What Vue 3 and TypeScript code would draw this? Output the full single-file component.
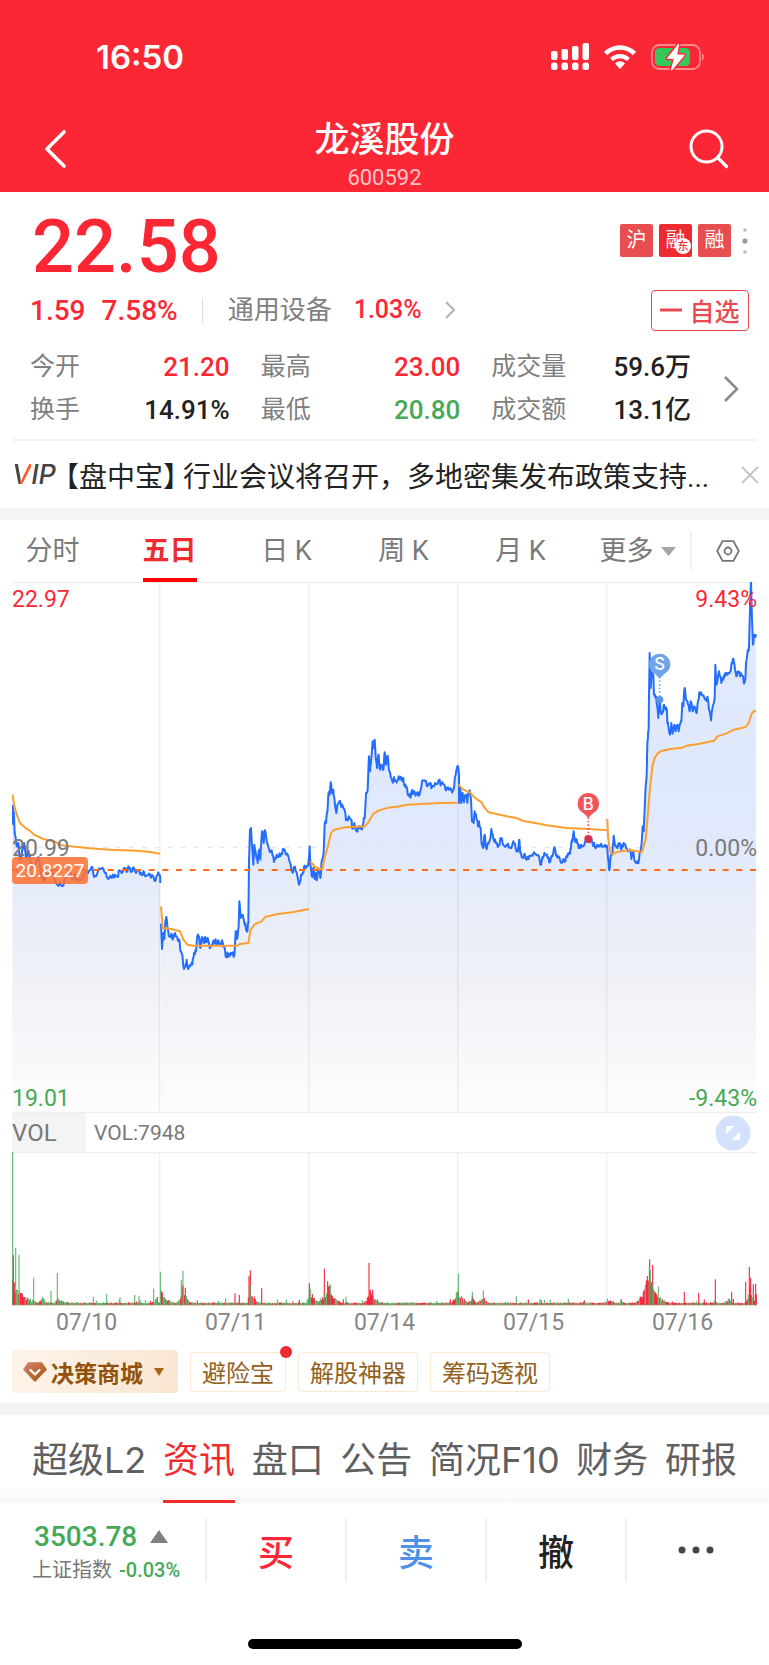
<script setup lang="ts">
import { ref } from 'vue'

type Point = [number, number]

interface Quote {
  label: string
  value: string
  tone: 'up' | 'down' | 'flat'
}

const quotes: Quote[] = [
  { label: '今开', value: '21.20', tone: 'up' },
  { label: '最高', value: '23.00', tone: 'up' },
  { label: '成交量', value: '59.6万', tone: 'flat' },
  { label: '换手', value: '14.91%', tone: 'flat' },
  { label: '最低', value: '20.80', tone: 'down' },
  { label: '成交额', value: '13.1亿', tone: 'flat' },
]

const periods = ['分时', '五日', '日 K', '周 K', '月 K']
const activePeriod = ref('五日')
const dates = ['07/10', '07/11', '07/14', '07/15', '07/16']
const tools = ['避险宝', '解股神器', '筹码透视']
const sections = ['超级L2', '资讯', '盘口', '公告', '简况F10', '财务', '研报']
const activeSection = ref('资讯')

/* Deterministic noise so the minute-level ticks are stable between renders. */
function makeNoise(seed: number): () => number {
  let s = seed
  return () => {
    s = (s * 1103515245 + 12345) % 2147483648
    return s / 2147483648
  }
}

function shift(text: string, dx: number, dy: number): Point[] {
  return text
    .trim()
    .split(/\s+/)
    .map((pair) => {
      const [x, y] = pair.split(',').map(Number)
      return [x + dx, y + dy] as Point
    })
}

function lineOf(points: Point[]): string {
  return 'M' + points.map(([x, y]) => `${x.toFixed(1)} ${y.toFixed(1)}`).join('L')
}

const tick = makeNoise(7)
function roughen(points: Point[]): Point[] {
  const out: Point[] = [points[0]]
  for (let i = 1; i < points.length; i++) {
    const [ax, ay] = points[i - 1]
    const [bx, by] = points[i]
    if (bx - ax >= 4) {
      out.push([ax + (bx - ax) * 0.35, ay + (by - ay) * 0.35 + (tick() - 0.5) * 18])
      out.push([ax + (bx - ax) * 0.7, ay + (by - ay) * 0.7 + (tick() - 0.5) * 18])
    }
    out.push([bx, by])
  }
  return out
}

/* Chart units are one third of a CSS pixel at the design width. */
const FLOOR = 1592

const firstDay = shift(
  `37,135 38,78 42,110 44,160 47,175 50,200 55,190 60,240 66,215 72,190 78,235 86,215 92,255 100,260
  108,245 118,238 125,295 135,300 145,270 160,285 172,315 180,308 190,318 200,290 210,275 216,300 225,285
  235,305 245,300 255,280 268,272 277,262 282,292 290,287 300,268 307,264 312,275 320,292 335,295 345,285
  352,290 358,272 365,280 372,265 380,277 387,265 395,275 400,263 408,280 417,272 425,287 433,280 440,288
  450,287 458,290 464,304 472,287 480,287 481,310`, 0, 593)

const laterDays = [
  ...shift(
    `483,432 486,508 490,460 493,478 496,425 499,412 503,445 508,470 514,462 518,480 525,460 532,474 538,480
    542,515 547,525 550,560 556,562 560,540 565,568 570,560 577,555 582,520 588,515 592,470 597,470 601,505
    606,472 611,490 615,472 619,488 623,475 629,505 634,498 639,485 645,482 650,495 656,485 661,495 668,488
    674,505 678,532 684,522 690,528 697,525 703,528 707,455 711,478 716,440 718,365 722,415 728,405 733,430
    737,440 741,456 745,430 747,245 750,150 753,145 756,200 760,255 763,195 768,225 773,250 778,210 781,240
    785,165 789,158 791,190 795,152 800,185 807,207 815,212 822,247 830,225 836,232 844,222 851,212 858,225
    865,230 872,255 877,278 882,262 890,278 897,315 903,285 908,280 914,258 924,258 929,200 931,255
    933,265 937,292 941,265 944,298 947,280 950,302 955,268 961,295 966,240 971,215 974,135 978,130 983,85
    985,45 989,45 992,8 996,40 1000,30 1004,65 1009,100 1013,75 1018,65 1024,82 1030,85 1036,100 1038,122
    1046,110 1055,122 1056,145 1063,130 1070,155 1076,145 1083,148 1090,130 1094,115 1098,40 1103,30`, 0, 593),
  ...shift(
    `1107,740 1110,785 1114,745 1118,695 1121,715 1124,690 1127,740 1131,775 1136,735 1140,780 1144,765
    1150,780 1154,728 1158,765 1163,738 1168,785`, 0, -217),
  ...shift(
    `34,805 37,815 42,802 47,815 52,812 56,800 60,810 65,805 70,805 74,830 80,832 84,852 90,862 95,845
    100,850 106,858 112,848 117,858 122,840 128,812 136,815 142,830 150,825 156,832 165,820 176,812 184,822
    192,825 198,842 206,840 214,842 221,838 226,800 230,778 235,774 237,795 237,880 241,835 244,880 248,850
    252,878 257,855 262,880 266,850 270,848 273,870 276,935 281,940 284,905 289,925 294,950 297,935`, 1140, -217),
  ...shift(
    `302,145 305,195 309,205 314,165 318,205 324,190 330,180 334,148 340,175 347,190 356,195 363,175 369,195
    378,200 384,192 391,205 400,185 407,205 414,215 418,180 421,220 427,232 434,222 440,240 448,228 458,228
    468,225 477,230 483,255 489,235 495,225 503,235 510,248 517,230 524,203 530,225 536,230 544,250 550,238
    556,245 562,232 570,222 574,190 578,175 581,155 584,180 590,180 596,205 603,195 610,200 616,185 624,182
    632,178 638,192 644,200 652,195 660,200 670,200 678,203 682,205 684,235 688,272 692,230 697,225 701,168
    706,200 713,205 719,190 724,212 731,190 738,205 744,215 752,215 754,238 760,215 765,245 771,250 777,240
    781,215 785,190 788,140 791,155 794,90`, 1140, 593),
  ...shift(
    `797,830 800,800 802,700 806,660 807,560 809,430 812,535 815,490 820,495 822,555 828,560 832,590 835,625
    839,570 843,610 848,605 852,585 857,600 861,605 862,640 866,655 870,675 874,640 878,672 883,645 887,665
    892,645 896,665 899,645 904,635 907,580 910,590 914,535 918,570 924,585 929,605 932,575 938,605 943,590
    950,610 954,575 958,548 965,555 972,560 978,568 984,570 987,600 993,632 998,590 1004,565 1006,465
    1010,525 1017,485 1024,520 1030,510 1036,490 1044,490 1052,485 1056,460 1060,448 1065,480 1069,500
    1074,485 1080,500 1088,498 1092,522 1096,510 1098,460 1103,425 1107,415 1109,330 1113,218 1116,330
    1119,405 1123,375 1128,374`, 1140, -217),
]

const priceRuns = [roughen(firstDay), roughen(laterDays)]
const priceLine = priceRuns.map(lineOf).join('')
const priceArea = priceRuns
  .map((run) => `${lineOf(run)}L${run[run.length - 1][0]} ${FLOOR}L${run[0][0]} ${FLOOR}Z`)
  .join('')

const averageLine = [
  shift(`38,45 42,75 50,105 60,130 80,148 90,153 102,165 130,178 165,186 185,197 210,200 270,206 330,210 410,213
    450,217 481,222`, 0, 593),
  shift(`483,380 488,445 510,447 540,455 550,480 562,495 580,498 620,498 710,498 720,493 745,490 752,450 765,433
    785,425 795,412 830,404 880,397 927,388`, 0, 593),
  shift(`931,245 945,262 966,270 975,230 985,195 993,160 1003,150 1035,143 1095,140 1105,128 1120,102 1135,93
    1165,84 1200,80 1220,75 1320,70 1372,69`, 0, 593),
  shift(`235,15 250,30 270,38 285,55 305,68 312,82 326,98 380,110 410,115 430,124 470,131 500,137 560,145
    630,148 680,152`, 1140, 593),
  [
    ...shift('682,118 684,170 690,215 697,225 710,217 750,211 785,218 797,180 803,110', 1140, 593),
    ...shift(`809,845 817,770 824,745 832,732 842,725 870,718 908,714 920,708 955,703 1003,693 1012,680 1038,672
      1062,660 1097,652 1106,640 1114,614 1122,604 1128,604`, 1140, -217),
  ],
].map(lineOf).join('')

/* Volume: quiet background, clusters with decay on each side, single spikes. */
const VOL_FLOOR = 459
const clusters: [number, number, number, number][] = [
  [37, 75, 1, 38], [125, 26, 10, 18], [172, 22, 8, 30], [472, 24, 14, 3], [483, 62, 2, 16], [515, 14, 8, 12],
  [549, 66, 9, 11], [750, 60, 5, 14], [928, 52, 5, 18], [985, 62, 20, 20], [1112, 46, 13, 18],
  [1370, 44, 9, 24], [1418, 26, 12, 14], [1450, 28, 14, 14], [1822, 20, 8, 30], [1947, 108, 17, 18],
  [1978, 28, 8, 20], [2053, 14, 6, 8], [2145, 20, 5, 8], [2185, 22, 12, 10], [2250, 70, 7, 10], [2268, 60, 4, 2],
]
const spikes: [number, number, 'r' | 'g'][] = [
  [38, 459, 'g'], [40, 149, 'r'], [47, 172, 'g'], [57, 150, 'g'], [101, 82, 'g'], [153, 42, 'g'], [172, 96, 'g'],
  [280, 25, 'g'], [320, 33, 'g'], [360, 23, 'g'], [404, 30, 'g'], [417, 28, 'g'], [461, 49, 'g'], [481, 100, 'g'],
  [544, 76, 'g'], [549, 103, 'g'], [556, 52, 'r'], [677, 20, 'g'], [705, 35, 'r'], [718, 30, 'r'], [747, 86, 'r'],
  [751, 104, 'r'], [785, 50, 'r'], [928, 66, 'r'], [931, 49, 'g'], [973, 109, 'r'], [983, 71, 'r'], [991, 62, 'g'],
  [1038, 25, 'g'], [1107, 126, 'r'], [1118, 46, 'r'], [1375, 94, 'g'], [1417, 40, 'g'], [1450, 44, 'g'],
  [1549, 26, 'g'], [1620, 18, 'g'], [1949, 137, 'r'], [1951, 105, 'g'], [1958, 120, 'r'], [1975, 55, 'g'],
  [2053, 39, 'r'], [2096, 36, 'r'], [2146, 77, 'r'], [2195, 40, 'r'], [2237, 70, 'r'], [2248, 114, 'r'],
  [2252, 82, 'r'], [2260, 62, 'r'], [2267, 64, 'r'],
]
const volNoise = makeNoise(41)
const bars: Record<'r' | 'g', string> = { r: '', g: '' }
for (let x = 37; x < 2270; x += 3) {
  let h = 5 + volNoise() * 3
  if (volNoise() > 0.95) h += volNoise() * 12
  for (const [center, height, left, right] of clusters) {
    const d = x < center ? (center - x) / left : (x - center) / right
    if (d < 3) h = Math.max(h, height * Math.exp(-d) * (0.6 + volNoise() * 0.5))
  }
  const rising = x > 1900 || (x > 960 && x < 1130) || (x > 735 && x < 752)
  const key = volNoise() < (rising ? 0.62 : 0.45) ? 'r' : 'g'
  bars[key] += `M${x} ${VOL_FLOOR}V${(VOL_FLOOR - h).toFixed(1)}`
}
for (const [x, h, key] of spikes) bars[key] += `M${x} ${VOL_FLOOR}V${VOL_FLOOR - h}`

const dayLines = [484, 931, 1378, 1825]
</script>

<template>
  <div class="page">
    <header class="top">
      <div class="status">
        <time class="clock">16:50</time>
        <div class="indicators">
          <svg class="signal" viewBox="0 0 38 28" aria-hidden="true">
            <g fill="#fff">
              <rect x="0" y="8" width="6.500" height="9" rx="2" /><rect x="10.500" y="6" width="6.500" height="11" rx="2" />
              <rect x="21" y="3" width="6.500" height="14" rx="2" /><rect x="31.500" y="0" width="6.500" height="17" rx="2" />
              <rect x="0" y="19.500" width="6.500" height="7.500" rx="2.500" /><rect x="10.500" y="19.500" width="6.500" height="7.500" rx="2.500" />
              <rect x="21" y="19.500" width="6.500" height="7.500" rx="2.500" /><rect x="31.500" y="19.500" width="6.500" height="7.500" rx="2.500" />
            </g>
          </svg>
          <svg class="wifi" viewBox="0 0 34 26" aria-hidden="true">
            <path d="M2.500 9.500C11 1.500 23 1.500 31.500 9.500" fill="none" stroke="#fff" stroke-width="4.600" />
            <path d="M8.500 15.500C13.500 11 20.500 11 25.500 15.500" fill="none" stroke="#fff" stroke-width="4.200" />
            <path d="M12.500 19.500C15 17.300 19 17.300 21.500 19.500L17 24.500Z" fill="#fff" stroke="#fff" stroke-linejoin="round" />
          </svg>
          <svg class="battery" viewBox="0 0 54 28" aria-hidden="true">
            <rect x="1" y="2" width="48" height="24" rx="7.500" fill="none" stroke="#fd8890" stroke-width="1.800" />
            <rect x="4" y="5" width="35" height="18" rx="4.500" fill="#34c759" />
            <path d="M51 10.500c2.500 1 2.500 6 0 7z" fill="#fd8890" />
            <path d="M27.500 1.500L16.500 15.500h7L20.500 27L33 12h-7.500z" fill="#fff" stroke="#fb2735" stroke-width="4" stroke-linejoin="round" paint-order="stroke" />
            <path d="M27.500 1.500L16.500 15.500h7L20.500 27L33 12h-7.500z" fill="#fff" stroke="#fff" stroke-width="1.200" stroke-linejoin="round" />
          </svg>
        </div>
      </div>
      <div class="titlebar">
        <button class="icon-button" aria-label="返回">
          <svg width="24" height="40" viewBox="0 0 24 40"><path d="M20 3L3 20L20 37" fill="none" stroke="#fff" stroke-width="3.600" stroke-linecap="round" stroke-linejoin="round" /></svg>
        </button>
        <div class="heading">
          <h1>龙溪股份</h1>
          <span>600592</span>
        </div>
        <button class="icon-button" aria-label="搜索">
          <svg width="40" height="40" viewBox="0 0 40 40"><circle cx="17.500" cy="17.500" r="15.500" fill="none" stroke="#fff" stroke-width="3" /><path d="M28.500 28.500L37.500 37.500" stroke="#fff" stroke-width="3.200" stroke-linecap="round" /></svg>
        </button>
      </div>
    </header>

    <section class="summary">
      <div class="price-row">
        <strong class="price">22.58</strong>
        <div class="badges">
          <span class="badge">沪</span>
          <span class="badge vivid">融<i>东</i></span>
          <span class="badge">融</span>
          <svg width="8" height="30" viewBox="0 0 8 30" aria-hidden="true"><circle cx="4" cy="4" r="1.800" fill="#bbb" /><circle cx="4" cy="15" r="2.600" fill="#999" /><circle cx="4" cy="26" r="1.800" fill="#bbb" /></svg>
        </div>
      </div>
      <div class="change-row">
        <span class="change up">1.59</span>
        <span class="change up">7.58%</span>
        <a class="sector" href="#sector">
          <span>通用设备</span>
          <span class="sector-change up">1.03%</span>
          <svg width="12" height="18" viewBox="0 0 12 18"><path d="M2 1L10 9L2 17" fill="none" stroke="#b0b0b0" stroke-width="2" /></svg>
        </a>
        <button class="watch"><svg width="22" height="4" viewBox="0 0 22 4"><path d="M0 2H22" stroke="#e84a4f" stroke-width="3" /></svg>自选</button>
      </div>
      <div class="stats">
        <dl>
          <div v-for="q in quotes" :key="q.label">
            <dt>{{ q.label }}</dt>
            <dd :class="q.tone">{{ q.value }}</dd>
          </div>
        </dl>
        <button class="icon-button" aria-label="更多行情">
          <svg width="18" height="28" viewBox="0 0 18 28"><path d="M3 2L15 14L3 26" fill="none" stroke="#8a8a8a" stroke-width="2.600" /></svg>
        </button>
      </div>
    </section>

    <section class="notice">
      <span class="vip"><b>V</b>IP</span>
      <a href="#notice"><span class="bracket">【盘中宝】</span>行业会议将召开，多地密集发布政策支持...</a>
      <button class="icon-button" aria-label="关闭">
        <svg width="18" height="18" viewBox="0 0 18 18"><path d="M1 1L17 17M17 1L1 17" stroke="#c6c6c6" stroke-width="2" /></svg>
      </button>
    </section>

    <nav class="periods">
      <div class="period-list">
        <button v-for="p in periods" :key="p" :class="{ active: p === activePeriod }" @click="activePeriod = p"><span>{{ p }}</span></button>
        <button><span>更多</span><svg width="15" height="9" viewBox="0 0 15 9"><path d="M0 0H15L7.500 9Z" fill="#a6a6a6" /></svg></button>
      </div>
      <button class="settings" aria-label="图表设置">
        <svg width="24" height="22" viewBox="0 0 24 22"><g fill="none" stroke="#777" stroke-width="1.800"><path d="M6.500 1.200H17.500L22.800 11L17.500 20.800H6.500L1.200 11Z" stroke-linejoin="round" /><circle cx="12" cy="11" r="3.500" /></g></svg>
      </button>
    </nav>

    <main class="charts">
      <div class="price-chart">
        <svg viewBox="36 0 2235 1594" role="img" aria-label="五日价格走势">
          <defs>
            <linearGradient id="area" x1="0" y1="0" x2="0" y2="1592" gradientUnits="userSpaceOnUse">
              <stop offset="0" stop-color="#dfe9fe" /><stop offset="0.5" stop-color="#e1e9fb" />
              <stop offset="0.75" stop-color="#eff1f6" /><stop offset="1" stop-color="#fdfdfd" />
            </linearGradient>
          </defs>
          <path :d="priceArea" fill="url(#area)" />
          <path d="M36 2H2271M36 1591H2271" stroke="#eee" stroke-width="4" />
          <path v-for="x in dayLines" :key="x" :d="`M${x - 5} 0V1592`" stroke="#000" stroke-opacity="0.060" stroke-width="4" />
          <path d="M36 796H2271" stroke="#dde2ea" stroke-width="3" stroke-dasharray="14 25" />
          <path :d="priceLine" fill="none" stroke="#256dfd" stroke-width="6" stroke-linejoin="round" />
          <path d="M36 864H2271" stroke="#fd6a1c" stroke-width="6" stroke-dasharray="18 23" />
          <path :d="averageLine" fill="none" stroke="#fd9f30" stroke-width="6" stroke-linejoin="round" />
          <g class="marker">
            <path d="M1979 284V342" stroke="#79a9e8" stroke-width="5" stroke-dasharray="5 6" />
            <circle cx="1979" cy="353" r="11" fill="#5c94e2" />
            <circle cx="1979" cy="247" r="32" fill="#6fa4e8" /><path d="M1962 272H1996L1979 290Z" fill="#6fa4e8" />
            <text x="1979" y="265">S</text>
            <path d="M1765 705V765" stroke="#ef4f5c" stroke-width="5" stroke-dasharray="5 6" />
            <circle cx="1765" cy="771" r="12" fill="#d92f53" />
            <circle cx="1765" cy="665" r="32" fill="#f2545c" /><path d="M1748 690H1782L1765 708Z" fill="#f2545c" />
            <text x="1765" y="683">B</text>
          </g>
        </svg>
        <span class="scale top-left up">22.97</span>
        <span class="scale top-right up">9.43%</span>
        <span class="scale mid-left">20.99</span>
        <span class="scale mid-right">0.00%</span>
        <span class="cost">20.8227</span>
        <span class="scale bottom-left down">19.01</span>
        <span class="scale bottom-right down">-9.43%</span>
      </div>
      <div class="volume-head">
        <button class="indicator">VOL</button>
        <span>VOL:7948</span>
        <button class="expand" aria-label="展开图表">
          <svg width="36" height="36" viewBox="0 0 36 36"><circle cx="18" cy="18" r="17.500" fill="#d3e0fe" /><path d="M11 11H19.500L11 19.500ZM25 25H16.500L25 16.500Z" fill="#fff" /></svg>
        </button>
      </div>
      <div class="volume-chart">
        <svg viewBox="36 0 2235 462" role="img" aria-label="成交量">
          <path d="M36 2H2271" stroke="#eee" stroke-width="4" />
          <path v-for="x in dayLines" :key="x" :d="`M${x - 5} 0V459`" stroke="#f0f0f0" stroke-width="4" />
          <path :d="bars.r" stroke="#fb2740" stroke-width="3.400" />
          <path :d="bars.g" stroke="#45a957" stroke-opacity="0.850" stroke-width="3.400" />
          <path d="M36 459H2271" stroke="#9a8f5f" stroke-width="2" />
        </svg>
      </div>
      <div class="dates"><span v-for="d in dates" :key="d">{{ d }}</span></div>
      <div class="tools">
        <button class="shop">
          <svg width="24" height="20" viewBox="0 0 24 20"><defs><linearGradient id="gem" x1="0" y1="0" x2="1" y2="1"><stop offset="0" stop-color="#d58268" /><stop offset="1" stop-color="#a55310" /></linearGradient></defs><path d="M5.500 1H18.500L23 7.500L12 19L1 7.500Z" fill="url(#gem)" stroke="url(#gem)" stroke-width="1.500" stroke-linejoin="round" /><path d="M7.500 8L12 12.500L16.500 8" fill="none" stroke="#fff" stroke-width="2.200" stroke-linecap="round" stroke-linejoin="round" /></svg>
          <b>决策商城</b>
          <svg class="caret" width="10" height="8" viewBox="0 0 10 8"><path d="M0 0H10L5 8Z" fill="#ac6314" /></svg>
        </button>
        <button v-for="(t, i) in tools" :key="t" class="tool">{{ t }}<i v-if="i === 0" class="dot"></i></button>
      </div>
    </main>

    <nav class="sections">
      <button v-for="s in sections" :key="s" :class="{ active: s === activeSection }" @click="activeSection = s">{{ s }}</button>
    </nav>

    <footer class="bottom">
      <div class="actions">
        <a class="index" href="#index">
          <span class="index-value down">3503.78<svg width="18" height="13" viewBox="0 0 18 13"><path d="M9 0L18 13H0Z" fill="#808080" /></svg></span>
          <span class="index-name">上证指数 <em class="down">-0.03%</em></span>
        </a>
        <button class="buy">买</button>
        <button class="sell">卖</button>
        <button class="cancel">撤</button>
        <button aria-label="更多">
          <svg width="36" height="8" viewBox="0 0 36 8"><g fill="#444"><circle cx="4" cy="4" r="3.500" /><circle cx="18" cy="4" r="3.500" /><circle cx="32" cy="4" r="3.500" /></g></svg>
        </button>
      </div>
      <div class="home"></div>
    </footer>
  </div>
</template>

<style>
body {
  background: #fff;
}
</style>

<style scoped>
.page {
  font-family: Roboto, "Noto Sans CJK SC", sans-serif;
  color: #222;
  background: #fff;
}

button {
  margin: 0;
  padding: 0;
  border: 0;
  background: none;
  font: inherit;
  color: inherit;
  cursor: pointer;
}

a {
  color: inherit;
  text-decoration: none;
}

svg {
  display: block;
  flex: none;
}

.up {
  color: #fb2735;
}

.down {
  color: #45a957;
}

.icon-button {
  display: flex;
  align-items: center;
  justify-content: center;
}

.top {
  background: #fb2735;
  color: #fff;
}

.status {
  display: flex;
  align-items: center;
  justify-content: space-between;
  height: 114px;
  padding: 0 64px 0 96px;
}

.clock {
  font: 600 33px/40px Inter, sans-serif;
}

.indicators {
  display: flex;
  align-items: center;
  gap: 14px;
}

.signal {
  width: 38px;
  height: 28px;
}

.wifi {
  width: 34px;
  height: 26px;
}

.battery {
  width: 54px;
  height: 28px;
}

.titlebar {
  display: flex;
  align-items: flex-start;
  justify-content: space-between;
  height: 78px;
  padding: 0 40px 0 44px;
}

.titlebar .icon-button {
  width: 40px;
  height: 70px;
}

.titlebar .icon-button:first-child {
  width: 24px;
  margin-right: 12px;
}

.heading {
  display: flex;
  flex-direction: column;
  align-items: center;
}

.heading h1 {
  margin: 0;
  font-size: 35px;
  font-weight: 500;
  line-height: 54px;
}

.heading span {
  font-size: 22px;
  line-height: 20px;
  color: #ffc3c7;
}

.summary {
  padding-left: 30px;
}

.price-row {
  display: flex;
  align-items: center;
  justify-content: space-between;
  height: 97px;
  padding: 0 20px 0 2px;
}

.price {
  padding-top: 12px;
  font-size: 74px;
  font-weight: 500;
  line-height: 88px;
  color: #fb2735;
}

.badges {
  display: flex;
  align-items: center;
  gap: 6px;
}

.badge {
  position: relative;
  width: 33px;
  height: 33px;
  border-radius: 2px;
  background: #e84d50;
  color: #fff;
  font-size: 20px;
  line-height: 32px;
  text-align: center;
}

.badges svg {
  margin-left: 4px;
}

.vivid {
  background: #ee2b2e;
}

.vivid i {
  position: absolute;
  right: 1px;
  bottom: 3px;
  width: 16px;
  height: 16px;
  border-radius: 50%;
  background: #fff;
  color: #ee2b2e;
  font: 500 11px/15px "Noto Sans CJK SC", sans-serif;
}

.change-row {
  display: flex;
  align-items: center;
  height: 42px;
  padding-right: 20px;
}

.change {
  margin-right: 16px;
  font-size: 28px;
  font-weight: 500;
}

.sector {
  display: flex;
  align-items: center;
  gap: 22px;
  height: 24px;
  margin-left: 8px;
  padding-left: 25px;
  border-left: 1px solid #ddd;
  font-size: 26px;
  line-height: 24px;
  color: #808080;
}

.sector-change {
  font-size: 25px;
  font-weight: 500;
}

.watch {
  display: flex;
  align-items: center;
  justify-content: center;
  gap: 7px;
  box-sizing: border-box;
  width: 98px;
  height: 41px;
  margin-left: auto;
  border: 1px solid #e84a4f;
  border-radius: 4px;
  color: #e84a4f;
  font-size: 25px;
  font-weight: 500;
}

.stats {
  display: flex;
  align-items: center;
  padding: 16px 29px 9px 0;
}

.stats dl {
  display: grid;
  flex: 1;
  grid-template-columns: repeat(3, 1fr);
  column-gap: 31px;
  row-gap: 3px;
  margin: 0 31px 0 0;
}

.stats dl div {
  display: flex;
  justify-content: space-between;
  font-size: 25px;
  line-height: 40px;
}

.stats dt {
  color: #808080;
}

.stats dd {
  margin: 0;
  font-size: 26px;
  font-weight: 500;
}

.notice {
  display: flex;
  align-items: center;
  height: 67px;
  margin: 0 12px;
  border-top: 2px solid #f3f3f3;
}

.vip {
  width: 46px;
  font: italic 27px/40px Inter, sans-serif;
  font-weight: 500;
  color: #444;
}

.vip b {
  background: linear-gradient(100deg, #444 50%, #fb5c2a 51%);
  background-clip: text;
  -webkit-background-clip: text;
  color: transparent;
  font-weight: 500;
}

.notice a {
  flex: 1;
  margin-left: 7px;
  font-size: 28px;
  white-space: nowrap;
}

.bracket {
  margin-right: 6px;
  font-feature-settings: "halt";
}

.notice .icon-button {
  margin-right: -2px;
}

.periods {
  display: flex;
  align-items: center;
  height: 62px;
  border-top: 12px solid #f4f4f4;
  font-size: 27px;
  color: #7a7a7a;
}

.period-list {
  display: flex;
  flex: 1;
  margin: 0 -6px;
}

.period-list button {
  display: flex;
  flex: 1 1 0;
  align-items: center;
  justify-content: center;
  gap: 7px;
  height: 62px;
}

.period-list span {
  box-sizing: border-box;
  height: 62px;
  line-height: 62px;
}

.period-list .active span {
  border-bottom: 4px solid #fe0000;
  color: #ee2b2e;
  font-weight: 700;
}

.settings {
  display: flex;
  align-items: center;
  justify-content: center;
  width: 79px;
  height: 38px;
  padding-right: 6px;
  box-sizing: border-box;
  border-left: 2px solid #f0f0f0;
}

.charts {
  padding: 0 12px;
}

.price-chart {
  position: relative;
}

.price-chart svg,
.volume-chart svg {
  width: 100%;
  height: auto;
}

.marker text {
  fill: #fff;
  font: 500 50px Inter, sans-serif;
  text-anchor: middle;
}

.scale {
  position: absolute;
  font-size: 23px;
  line-height: 28px;
}

.scale:not(.up, .down) {
  color: #7a7a7a;
}

.top-left {
  top: 4px;
  left: 0;
}

.top-right {
  top: 4px;
  right: 0;
}

.mid-left {
  top: 253px;
  left: 0;
}

.mid-right {
  top: 253px;
  right: 0;
}

.bottom-left {
  bottom: 0;
  left: 0;
}

.bottom-right {
  bottom: 0;
  right: 0;
}

.cost {
  position: absolute;
  top: 275px;
  left: 0;
  width: 76px;
  border-radius: 4px;
  background: rgba(255, 113, 51, 0.86);
  color: #fff;
  font-size: 19px;
  line-height: 27px;
  text-align: center;
}

.volume-head {
  display: flex;
  align-items: center;
  height: 39px;
  font-size: 21px;
  color: #777;
}

.indicator {
  width: 74px;
  height: 39px;
  margin-right: 8px;
  background: #f4f4f4;
  font-size: 24px;
  text-align: left;
}

.expand {
  margin: 0 6px 0 auto;
}

.dates {
  display: flex;
  height: 36px;
}

.dates span {
  flex: 1;
  font-size: 23px;
  line-height: 34px;
  text-align: center;
  color: #858585;
}

.tools {
  display: flex;
  align-items: center;
  gap: 12px;
  height: 43px;
  padding: 8px 0 10px;
}

.shop {
  display: flex;
  align-items: center;
  gap: 4px;
  height: 43px;
  padding: 0 13px 0 11px;
  border-radius: 4px;
  background: linear-gradient(100deg, #fdf4e9, #f8e6d0);
  font-size: 23px;
  color: #92520c;
}

.shop b {
  font-weight: 700;
}

.caret {
  margin: 0 1px 0 7px;
}

.tool {
  position: relative;
  height: 40px;
  padding: 0 11px;
  box-sizing: border-box;
  border: 1px solid #fce9d4;
  border-radius: 4px;
  color: #92601c;
  font-size: 24px;
}

.dot {
  position: absolute;
  top: -7px;
  right: -7px;
  width: 12px;
  height: 12px;
  border-radius: 50%;
  background: #ee2b2e;
}

.sections {
  display: flex;
  justify-content: space-between;
  height: 88px;
  padding: 0 32px;
  border-top: 12px solid #f4f4f4;
  background: linear-gradient(#fff 80%, #f8f8f8);
  font-family: Inter, "Noto Sans CJK SC", sans-serif;
  font-size: 36px;
  color: #606060;
}

.sections button {
  box-sizing: border-box;
  height: 88px;
  padding-bottom: 5px;
}

.sections .active {
  padding-bottom: 2px;
  border-bottom: 3px solid #ee2b2e;
  color: #ee2b2e;
}

.bottom {
  padding-bottom: 16px;
}

.actions {
  display: flex;
  height: 64px;
  padding: 15px 0 57px;
}

.actions > * {
  display: flex;
  flex: 1;
  align-items: center;
  justify-content: center;
}

.actions button {
  box-sizing: border-box;
  border-left: 2px solid #f0f0f0;
  font-size: 36px;
  font-weight: 500;
}

.actions button:last-child {
  padding-right: 4px;
}

.actions .index {
  flex: none;
  flex-direction: column;
  align-items: flex-start;
  width: 173px;
  padding-left: 32px;
}

.index-value {
  display: flex;
  align-items: center;
  gap: 13px;
  padding: 3px 0 0 2px;
  font-size: 28px;
  font-weight: 500;
  line-height: 36px;
}

.index-name {
  font-size: 20px;
  line-height: 30px;
  color: #777;
}

.index-name em {
  margin-left: 2px;
  font-style: normal;
  font-weight: 500;
}

.buy {
  color: #fb2735;
}

.sell {
  color: #4f91e6;
}

.home {
  width: 274px;
  height: 10px;
  margin: 0 auto;
  border-radius: 5px;
  background: #000;
}
</style>
